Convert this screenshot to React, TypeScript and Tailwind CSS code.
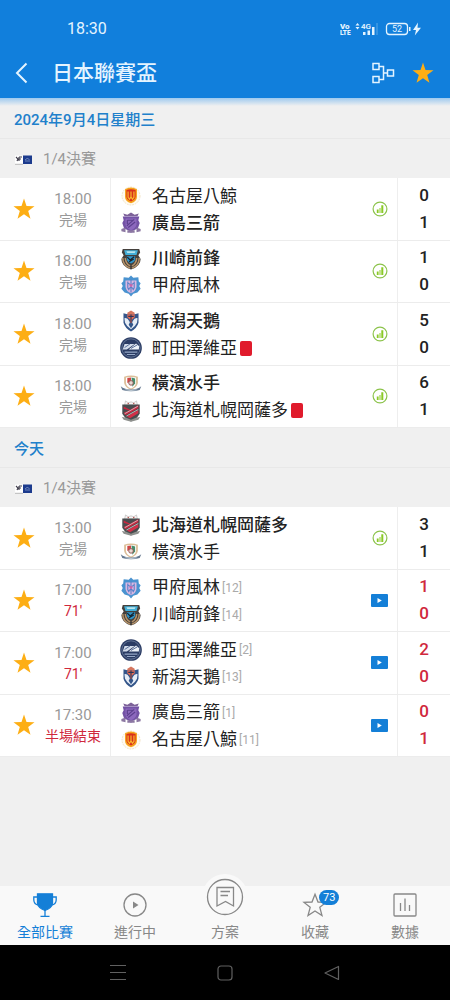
import type { ReactNode } from "react";

type TeamId = "nagoya" | "hiroshima" | "kawasaki" | "kofu" | "niigata" | "machida" | "yokohama" | "sapporo";

type Side = { team: TeamId; score: number; win?: boolean; rank?: number; red?: boolean };

type Match = { time: string; status: string; live?: boolean; sides: [Side, Side] };

const names: Record<TeamId, string> = {
  nagoya: "名古屋八鯨",
  hiroshima: "廣島三箭",
  kawasaki: "川崎前鋒",
  kofu: "甲府風林",
  niigata: "新潟天鵝",
  machida: "町田澤維亞",
  yokohama: "橫濱水手",
  sapporo: "北海道札幌岡薩多",
};

const crests: Record<TeamId, ReactNode> = {
  nagoya: (
    <>
      <circle cx="12" cy="12" r="9.8" fill="#fffaf0" stroke="#efdfc0" strokeWidth="1" strokeDasharray="2 1" />
      <path d="M5.5 4.5Q12 1 18.5 4.5V13Q18.500 17.500 12 20Q5.500 17.500 5.500 13Z" fill="#f6a21b" />
      <path d="M7 5.500Q12 3.500 17 5.500V13Q16.500 16 12 18Q7.500 16 7 13Z" fill="#d9301c" />
      <path d="M8.800 7V13.500L10.400 15.500L12 13V7M12 13L13.600 15.500L15.200 13.500V7" fill="none" stroke="#f9b92c" strokeWidth="1.300" />
    </>
  ),
  hiroshima: (
    <>
      <path d="M5 4.500L3.500 1.500L8 3L12 .5L16 3L20.500 1.500L19 4.500Z" fill="#7d6299" />
      <path d="M3 5H21L20 9L21.500 12L19.500 18L14 20.500L12 23L10 20.500L4.500 18L2.500 12L4 9Z" fill="#7352a5" />
      <path d="M6 7H18V14Q17 18 12 20Q7 18 6 14Z" fill="#8c68bd" />
      <path d="M8 9H15M7.500 15L15.500 8M9 17L16.500 11M8 9V13" stroke="#5c3f8d" strokeWidth="1.300" fill="none" />
      <path d="M1.500 18.500L6 17V22L1.500 21ZM22.500 18.500L18 17V22L22.500 21ZM8 20H16V22.500H8Z" fill="#8c78a2" />
    </>
  ),
  kawasaki: (
    <>
      <path d="M3 1H21L22 5L20 8L22.500 12Q22.500 20 12 23.500Q1.500 20 1.500 12L4 8L2 5Z" fill="#45403c" />
      <path d="M4.500 2.500H19.500L18 7.500H6Z" fill="#43afd8" />
      <path d="M7 3.500H17L16 5.500H8Z" fill="#b9e5ee" />
      <path d="M3 11Q3 19 11 22M21 11Q21 19 13 22M5.800 11Q6 17 11 19.500M18.200 11Q18 17 13 19.500" stroke="#b6936a" strokeWidth="1.600" fill="none" />
      <path d="M7.500 9H16.500V13Q15 16 12 17Q9 16 7.500 13Z" fill="#2e94c8" />
      <path d="M8 10L11 13L15.500 9.500M10 15L15 12" stroke="#17222d" strokeWidth="1.300" fill="none" />
    </>
  ),
  kofu: (
    <>
      <path d="M12 .5L14.500 3L20 2.500L20.500 7L22.500 9L21 12L22.500 15L19 19L14.500 20.500L12 23.500L9.500 20.500L5 19L1.500 15L3 12L1.500 9L3.500 7L4 2.500L9.500 3Z" fill="#4a93d0" />
      <path d="M6 6H18V13Q17 18 12 20Q7 18 6 13Z" fill="#dbb8e2" />
      <path d="M8.500 7V14L10 16.500M15.500 7V14L14 16.500M12 5V19M8 8L12 11L16 8M9 15.500L12 13L15 15.500" stroke="#5a80c8" strokeWidth="1.200" fill="none" />
      <circle cx="12" cy="11.500" r="1.600" fill="#c768ab" />
    </>
  ),
  niigata: (
    <>
      <path d="M8 3L12 .5L16 3V6H8Z" fill="#d5775f" />
      <path d="M3.800 3.500L9 5H15L20.200 3.500V14Q18.500 20 12 23.500Q5.500 20 3.800 14Z" fill="#34568a" />
      <path d="M4.800 9Q8 8 10 12L12 16L14 12Q16 8 19.200 9L18.500 14Q16.500 18.500 12 21Q7.500 18.500 5.500 14Z" fill="#e6edf6" />
      <path d="M9.500 16L12 20L14.500 16L13 13H11Z" fill="#34568a" />
      <path d="M8 5H16V8L13 10.500V14H11V10.500L8 8Z" fill="#e56a52" />
      <path d="M12 5V14M9 7H15" stroke="#2a3557" strokeWidth="1.200" />
    </>
  ),
  machida: (
    <>
      <circle cx="12" cy="12" r="11.800" fill="#2b3c64" />
      <circle cx="12" cy="12" r="10" fill="none" stroke="#7586a6" strokeWidth=".8" />
      <path d="M5 7.500H16L7.500 13.500H3Z" fill="#d3dcea" />
      <path d="M17.500 7L21 10L20.500 13.500H9.500Z" fill="#edf2f8" />
      <path d="M5 11.500L11 7.500M12 12.500L19 8.500" stroke="#4b6391" strokeWidth="1" />
      <path d="M5 16.500H19M7.500 19H16.500" stroke="#96a8c6" strokeWidth="1.100" />
    </>
  ),
  yokohama: (
    <>
      <path d="M4.500 4Q12 1.500 19.500 4V11Q18.500 16 12 18.500Q5.500 16 4.500 11Z" fill="#dcbf9a" />
      <path d="M6.500 5Q12 3.500 17.500 5V11Q17 15 12 17Q7 15 6.500 11Z" fill="#fff" />
      <path d="M8 5.500L12 5V9L8 11Z" fill="#cf4545" />
      <path d="M12.500 5L16.500 6V11.500L13.500 15Z" fill="#458d6c" />
      <circle cx="12" cy="10.800" r="2.500" fill="#e8d9d2" stroke="#8e5151" strokeWidth="1" />
      <path d="M.8 14.500Q5 18 12 18Q19 18 23.200 14.500L21.500 18.500Q12 21.500 2.500 18.500Z" fill="#64788f" />
      <path d="M6 18.300Q12 19.800 18 18.300" stroke="#ccd6df" strokeWidth="1" fill="none" />
    </>
  ),
  sapporo: (
    <>
      <path d="M5 5.500L6 1L9 3L12 2L15 3L18 1L19 5.500Z" fill="#f6f3f2" stroke="#aaa" strokeWidth=".6" />
      <circle cx="9" cy="3.800" r=".8" fill="#b34f4b" />
      <circle cx="15" cy="3.800" r=".8" fill="#b34f4b" />
      <path d="M2.500 5H21.500V15L18 20L12 23.500L6 20L2.500 15Z" fill="#484c4e" />
      <path d="M4 7L11 10.500L20 5.500V9L6 16.500L4 14L10 11.500L4 9.500Z" fill="#c8273f" />
      <path d="M7.500 18L20 11V14.500L11 20Z" fill="#d32f47" />
      <path d="M5 15L19.500 6.800M7 17.500L20 10.300" stroke="#dadddd" strokeWidth=".8" />
      <path d="M2 18.500L6 19L12 21.500L18 19L22 18.500L20 21.500L12 23.800L4 21.500Z" fill="#8e908d" />
    </>
  ),
};

const wednesday: Match[] = [
  { time: "18:00", status: "完場", sides: [{ team: "nagoya", score: 0 }, { team: "hiroshima", score: 1, win: true }] },
  { time: "18:00", status: "完場", sides: [{ team: "kawasaki", score: 1, win: true }, { team: "kofu", score: 0 }] },
  { time: "18:00", status: "完場", sides: [{ team: "niigata", score: 5, win: true }, { team: "machida", score: 0, red: true }] },
  { time: "18:00", status: "完場", sides: [{ team: "yokohama", score: 6, win: true }, { team: "sapporo", score: 1, red: true }] },
];

const today: Match[] = [
  { time: "13:00", status: "完場", sides: [{ team: "sapporo", score: 3, win: true }, { team: "yokohama", score: 1 }] },
  { time: "17:00", status: "71'", live: true, sides: [{ team: "kofu", score: 1, rank: 12 }, { team: "kawasaki", score: 0, rank: 14 }] },
  { time: "17:00", status: "71'", live: true, sides: [{ team: "machida", score: 2, rank: 2 }, { team: "niigata", score: 0, rank: 13 }] },
  { time: "17:30", status: "半場結束", live: true, sides: [{ team: "hiroshima", score: 0, rank: 1 }, { team: "nagoya", score: 1, rank: 11 }] },
];

function Star() {
  return (
    <svg viewBox="0 0 22 22" className="size-[22px]" aria-hidden="true">
      <path d="M11 .6L13.500 8L21.500 8.200L15.200 13L17.500 20.800L11 16.200L4.500 20.800L6.800 13L.5 8.200L8.500 8Z" fill="#fdae14" />
    </svg>
  );
}

function StatusBar() {
  return (
    <div className="flex h-[58px] items-center justify-between pr-7 pl-[67px]">
      <span className="text-base text-[#e4f4ff]">18:30</span>
      <svg viewBox="0 0 82 16" className="h-4 w-[82px]" fill="#e4f4ff" aria-hidden="true">
        <g fontFamily="Roboto, sans-serif" fontWeight="900">
          <text x="0" y="7.500" fontSize="8">Vo</text>
          <text x="0" y="14" fontSize="6.500">LTE</text>
          <text x="21" y="8" fontSize="8" fontWeight="600">4G</text>
        </g>
        <path d="M15.500 4.500L17.500 2L19.500 4.500ZM15.500 6H19.500L17.500 8.500ZM23 11H25.500V14H23ZM27.500 9.500H30V14H27.500ZM32 6H34.500V14H32Z" />
        <path d="M37 2V14" stroke="#5ba9e8" />
        <rect x="46.500" y="2.500" width="21" height="11" rx="3" fill="none" stroke="#e4f4ff" strokeWidth="1.300" />
        <text x="57" y="11.200" fontSize="9" textAnchor="middle" fontFamily="Roboto, sans-serif">52</text>
        <path d="M69 6H70.500V10H69ZM78 1.500L73 9H76L74.800 14.500L81 6.800H77.500Z" />
      </svg>
    </div>
  );
}

function DateHeading({ children }: { children: ReactNode }) {
  return (
    <h2 className="flex h-10 items-center border-b border-[#e8e8e8] px-[14px] pt-1 text-[15px] font-medium text-[#2180cb]">
      {children}
    </h2>
  );
}

function RoundHeading() {
  return (
    <h3 className="flex h-[39px] items-center gap-[11px] px-[14px] pt-0.5 text-[15px] text-[#999]">
      <svg viewBox="0 0 18 10" className="h-[10px] w-[18px]" aria-hidden="true">
        <path d="M1 .5H9V9H1Z" fill="#fff" />
        <path d="M1 9.300H9" stroke="#aaa" strokeWidth=".8" />
        <path d="M2 2L4 4L3 6M5 2H8M5 4H7M5 2V6" stroke="#42404e" fill="none" strokeWidth="1.200" />
        <path d="M9 .5H18V9H9Z" fill="#1c3b8d" />
        <path d="M11 5Q13 2 15.500 4.500M11 6H16" stroke="#8398c8" fill="none" strokeWidth=".8" />
      </svg>
      1/4決賽
    </h3>
  );
}

function StatsIcon() {
  return (
    <svg viewBox="0 0 16 16" className="size-4" fill="none" aria-hidden="true">
      <circle cx="8" cy="8" r="6.900" stroke="#8cc34b" strokeWidth="1.200" />
      <path d="M4.800 8.500H6.600V12H4.800ZM7.500 7H8.500V12H7.500ZM9.300 4.300H11.300V12H9.300Z" fill="#8ac926" />
    </svg>
  );
}

function VideoIcon() {
  return (
    <svg viewBox="0 0 17 13" className="h-[13px] w-[17px]" aria-hidden="true">
      <rect width="17" height="13" rx="1" fill="#147fd7" />
      <path d="M6.500 4L10.800 6.500L6.500 9Z" fill="#fff" />
    </svg>
  );
}

function MatchRow({ match }: { match: Match }) {
  return (
    <li className="flex items-stretch border-b border-[#ececec] bg-white">
      <button type="button" aria-label="收藏" className="flex w-12 items-center justify-center">
        <Star />
      </button>
      <div className="-ml-3 flex w-[75px] flex-col items-center justify-center border-r border-[#eee] pt-0.5 text-sm leading-[21px] text-[#999]">
        <time className="text-[15px] leading-[21px]">{match.time}</time>
        <span className={match.live ? "text-[#d0283c]" : ""}>{match.status}</span>
      </div>
      <div className="flex flex-1 flex-col justify-center pt-0.5 pl-[9px]">
        {match.sides.map((side) => (
          <div key={side.team} className="flex h-[27px] items-center">
            <svg viewBox="0 0 24 24" className="mr-[10px] size-[22px]" aria-hidden="true">
              {crests[side.team]}
            </svg>
            <span className={side.win ? "text-[17px] font-medium text-[#222]" : "text-[17px] text-[#222]"}>{names[side.team]}</span>
            {side.rank && <span className="ml-0.5 text-xs text-[#aaa]">[{side.rank}]</span>}
            {side.red && <span role="img" aria-label="紅牌" className="ml-[3px] h-[15px] w-3 rounded-xs bg-[#e01b2c]" />}
          </div>
        ))}
      </div>
      <div className="flex w-9 items-center justify-center border-r border-[#eee]">
        {match.live ? <VideoIcon /> : <StatsIcon />}
      </div>
      <div className={`flex w-[52px] flex-col justify-center text-center text-[17px] leading-[27px] font-medium ${match.live ? "text-[#d0283c]" : "text-[#222]"}`}>
        {match.sides.map((side) => (
          <span key={side.team}>{side.score}</span>
        ))}
      </div>
    </li>
  );
}

function MatchList({ matches }: { matches: Match[] }) {
  return (
    <ul className="grid min-h-[250px] auto-rows-fr">
      {matches.map((match) => (
        <MatchRow key={match.time + match.sides[0].team} match={match} />
      ))}
    </ul>
  );
}

function NavItem({ label, active, children }: { label: string; active?: boolean; children: ReactNode }) {
  return (
    <a
      href="#"
      aria-current={active ? "page" : undefined}
      className={`flex flex-col items-center justify-end gap-1 pb-[3px] text-sm leading-5 ${active ? "text-[#147fd7]" : "text-[#888]"}`}
    >
      {children}
      <span>{label}</span>
    </a>
  );
}

function BottomNav() {
  return (
    <nav className="grid h-[59px] grid-cols-5 bg-[#f9f9f9]">
      <NavItem label="全部比賽" active>
        <svg viewBox="0 0 26 26" className="size-[26px]" fill="none" stroke="currentColor" strokeWidth="1.300" aria-hidden="true">
          <path d="M5.500 1.800H20.500V11Q20 16 13 18.500Q6 16 5.500 11Z" fill="currentColor" />
          <path d="M5.500 5H1.800V8Q2 12.500 6.500 13M20.500 5H24.200V8Q24 12.500 19.500 13M13 18V24M8.500 24.300H17.500" />
        </svg>
      </NavItem>
      <NavItem label="進行中">
        <svg viewBox="0 0 26 26" className="size-[26px]" fill="none" stroke="currentColor" strokeWidth="1.300" aria-hidden="true">
          <circle cx="13" cy="13" r="11" />
          <path d="M11 9.500L16.500 13L11 16.500Z" fill="currentColor" stroke="none" />
        </svg>
      </NavItem>
      <NavItem label="方案">
        <svg viewBox="0 0 48 48" className="-mt-4 -mb-[3px] size-12 shrink-0" fill="none" stroke="currentColor" strokeWidth="1.300" aria-hidden="true">
          <circle cx="24" cy="24" r="23" fill="#f9f9f9" stroke="none" />
          <circle cx="24" cy="24" r="17.500" />
          <path d="M16 14.500H32.500V33L24.500 28.500L16 33ZM19.500 18.500H29M19.500 22.500H27" />
        </svg>
      </NavItem>
      <NavItem label="收藏">
        <span className="relative">
          <svg viewBox="0 0 26 26" className="size-[26px]" fill="none" stroke="currentColor" strokeWidth="1.300" aria-hidden="true">
            <path d="M13 2.200L16 10L24 10.400L17.800 15.300L20 23.500L13 19L6 23.500L8.200 15.300L2 10.400L10 10Z" />
          </svg>
          <span className="absolute -top-[2px] left-[17px] rounded-full bg-[#147fd7] px-1 text-[11px] leading-[15px] text-white">73</span>
        </span>
      </NavItem>
      <NavItem label="數據">
        <svg viewBox="0 0 26 26" className="size-[26px]" fill="none" stroke="currentColor" strokeWidth="1.300" aria-hidden="true">
          <rect x="2" y="2" width="22" height="22" rx="1" />
          <path d="M8.500 11V19M13 6.500V19M17.500 13V19" />
        </svg>
      </NavItem>
    </nav>
  );
}

export default function App() {
  return (
    <div className="flex min-h-screen flex-col bg-[#f0f0f0] font-['Roboto','Noto_Sans_CJK_TC',sans-serif]">
      <header className="bg-[#117fdc] text-[#e4f4ff]">
        <StatusBar />
        <div className="flex h-10 items-start pr-4">
          <button type="button" aria-label="返回" className="flex h-[30px] w-[52px] items-center pl-[15px]">
            <svg viewBox="0 0 14 22" className="h-[22px] w-[14px]" fill="none" stroke="currentColor" strokeWidth="2" aria-hidden="true">
              <path d="M11.500 1.500L2 11L11.500 20.500" />
            </svg>
          </button>
          <h1 className="flex-1 text-[21px] leading-[30px] font-medium">日本聯賽盃</h1>
          <button type="button" aria-label="賽程圖" className="mr-[17px] flex h-[30px] items-center">
            <svg viewBox="0 0 24 24" className="size-6" fill="none" stroke="currentColor" strokeWidth="1.500" aria-hidden="true">
              <path d="M2 2.500H8V8.500H2ZM2 15.500H8V21.500H2ZM16.500 9H22.500V15H16.500ZM8 5.500H12.500V18.500H8M12.500 12H16.500" />
            </svg>
          </button>
          <button type="button" aria-label="收藏" className="mt-1">
            <Star />
          </button>
        </div>
      </header>
      <div className="-mb-2 h-2 bg-linear-to-b from-[#9dc9ee] to-[#f0f0f0]" />
      <main className="flex-1 pt-px">
        <DateHeading>2024年9月4日星期三</DateHeading>
        <RoundHeading />
        <MatchList matches={wednesday} />
        <DateHeading>今天</DateHeading>
        <RoundHeading />
        <MatchList matches={today} />
      </main>
      <BottomNav />
      <div className="grid h-[55px] grid-cols-[1fr_auto_1fr] items-center gap-[91px] bg-black text-[#606060]">
        <button type="button" aria-label="選單" className="justify-self-end">
          <svg viewBox="0 0 16 16" className="size-4" stroke="currentColor" aria-hidden="true">
            <path d="M0 .5H16M0 7.500H16M0 14.500H16" />
          </svg>
        </button>
        <button type="button" aria-label="主畫面">
          <svg viewBox="0 0 16 16" className="size-4" fill="none" stroke="currentColor" strokeWidth="1.200" aria-hidden="true">
            <rect x="1" y="1" width="14" height="14" rx="3" />
          </svg>
        </button>
        <button type="button" aria-label="返回" className="justify-self-start">
          <svg viewBox="0 0 16 16" className="size-4" fill="none" stroke="currentColor" strokeLinejoin="round" strokeWidth="1.200" aria-hidden="true">
            <path d="M14.500 1.500V14.500L1 8Z" />
          </svg>
        </button>
      </div>
    </div>
  );
}
